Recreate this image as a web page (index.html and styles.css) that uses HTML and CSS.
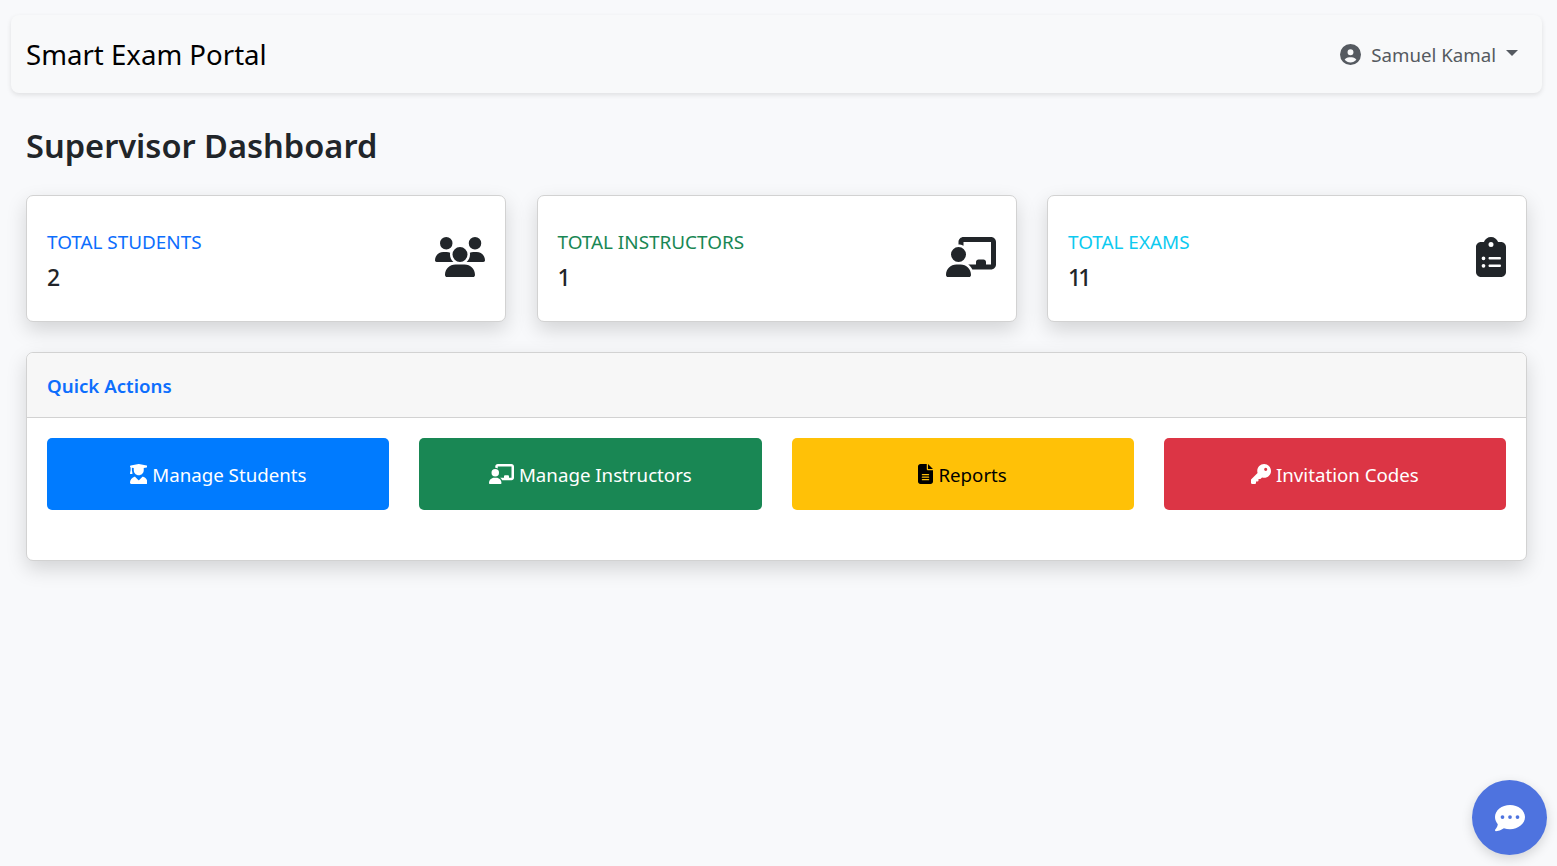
FILE: index.html
```html
<!DOCTYPE html>
<html lang="en">
<head>
  <meta charset="UTF-8" />
  <title>Supervisor Dashboard</title>
  <link rel="stylesheet" href="styles.css">
</head>
<body>

  <!-- Top bar -->
  <nav class="navbar">
    <a class="brand" href="#">Smart Exam Portal</a>
    <a class="user-menu" href="#">
      <svg class="user-icon" viewBox="0 0 512 512"><path d="M399 384.2C376.9 345.8 335.4 320 288 320H224c-47.4 0-88.9 25.8-111 64.2c35.2 39.2 86.2 63.8 143 63.8s107.8-24.7 143-63.8zM0 256a256 256 0 1 1 512 0A256 256 0 1 1 0 256zm256 16a72 72 0 1 0 0-144 72 72 0 1 0 0 144z"/></svg>
      <span>Samuel Kamal</span>
      <span class="caret"></span>
    </a>
  </nav>

  <main class="container">
    <h2 class="page-title">Supervisor Dashboard</h2>

    <!-- Stats -->
    <div class="stats">
      <div class="card stat-card">
        <div>
          <div class="stat-label text-blue">TOTAL STUDENTS</div>
          <div class="stat-value">2</div>
        </div>
        <svg class="stat-icon" viewBox="0 0 640 512"><path d="M144 0a80 80 0 1 1 0 160A80 80 0 1 1 144 0zM512 0a80 80 0 1 1 0 160A80 80 0 1 1 512 0zM0 298.7C0 239.8 47.8 192 106.7 192h42.7c15.9 0 31 3.5 44.6 9.7c-1.3 7.2-1.9 14.7-1.9 22.3c0 38.2 16.8 72.5 43.3 96c-.2 0-.4 0-.7 0H21.3C9.6 320 0 310.4 0 298.7zM405.3 320c-.2 0-.4 0-.7 0c26.6-23.5 43.3-57.8 43.3-96c0-7.6-.7-15-1.9-22.3c13.6-6.3 28.7-9.7 44.6-9.7h42.7C592.2 192 640 239.8 640 298.7c0 11.8-9.6 21.3-21.3 21.3H405.3zM224 224a96 96 0 1 1 192 0 96 96 0 1 1 -192 0zM128 485.3C128 411.7 187.7 352 261.3 352H378.7C452.3 352 512 411.7 512 485.3c0 14.7-11.9 26.7-26.7 26.7H154.7c-14.7 0-26.7-11.9-26.7-26.7z"/></svg>
      </div>
      <div class="card stat-card">
        <div>
          <div class="stat-label text-green">TOTAL INSTRUCTORS</div>
          <div class="stat-value">1</div>
        </div>
        <svg class="stat-icon" viewBox="0 0 640 512"><path d="M160 64c0-35.3 28.7-64 64-64H576c35.3 0 64 28.7 64 64V352c0 35.3-28.7 64-64 64H336.8c-11.8-25.5-29.9-47.5-52.4-64H384V320c0-17.7 14.3-32 32-32h64c17.7 0 32 14.3 32 32v32h64V64L224 64v49.1C205.2 102.2 183.3 96 160 96V64zm0 64a96 96 0 1 1 0 192 96 96 0 1 1 0-192zM133.3 352h53.3C260.3 352 320 411.7 320 485.3c0 14.7-11.9 26.7-26.7 26.7H26.7C11.9 512 0 500.1 0 485.3C0 411.7 59.7 352 133.3 352z"/></svg>
      </div>
      <div class="card stat-card">
        <div>
          <div class="stat-label text-cyan">TOTAL EXAMS</div>
          <div class="stat-value">11</div>
        </div>
        <svg class="stat-icon" viewBox="0 0 384 512"><path d="M192 0c-41.8 0-77.4 26.7-90.5 64H64C28.7 64 0 92.7 0 128V448c0 35.3 28.7 64 64 64H320c35.3 0 64-28.7 64-64V128c0-35.3-28.7-64-64-64H282.5C269.4 26.7 233.8 0 192 0zm0 64a32 32 0 1 1 0 64 32 32 0 1 1 0-64zM72 272a24 24 0 1 1 48 0 24 24 0 1 1 -48 0zm104-16H304c8.8 0 16 7.2 16 16s-7.2 16-16 16H176c-8.8 0-16-7.2-16-16s7.2-16 16-16zM72 368a24 24 0 1 1 48 0 24 24 0 1 1 -48 0zm88 0c0-8.8 7.2-16 16-16H304c8.8 0 16 7.2 16 16s-7.2 16-16 16H176c-8.8 0-16-7.2-16-16z"/></svg>
      </div>
    </div>

    <!-- Quick actions -->
    <div class="card actions-card">
      <div class="card-header">Quick Actions</div>
      <div class="card-body">
        <a class="btn btn-blue" href="#">
          <svg class="btn-icon" viewBox="0 0 448 512"><path d="M219.3 .5c3.1-.6 6.3-.6 9.4 0l200 40C439.9 42.7 448 52.6 448 64s-8.1 21.3-19.3 23.5L352 102.9V160c0 70.7-57.3 128-128 128s-128-57.3-128-128V102.9L48 93.3v65.1l15.7 78.4c.9 4.7-.3 9.6-3.3 13.3s-7.6 5.9-12.4 5.9H16c-4.8 0-9.3-2.1-12.4-5.9s-4.3-8.6-3.3-13.3L16 158.4V86.6C6.5 83.3 0 74.3 0 64C0 52.6 8.1 42.7 19.3 40.5l200-40zM111.9 327.7c10.5-3.4 21.8 .4 29.4 8.5l71 75.5c6.3 6.7 17 6.7 23.3 0l71-75.5c7.6-8.1 18.9-11.9 29.4-8.5C401 348.6 448 409.4 448 481.3c0 17-13.8 30.7-30.7 30.7H30.7C13.8 512 0 498.2 0 481.3c0-71.9 47-132.7 111.9-153.6z"/></svg>
          <span>Manage Students</span>
        </a>
        <a class="btn btn-green" href="#">
          <svg class="btn-icon" viewBox="0 0 640 512"><path d="M160 64c0-35.3 28.7-64 64-64H576c35.3 0 64 28.7 64 64V352c0 35.3-28.7 64-64 64H336.8c-11.8-25.5-29.9-47.5-52.4-64H384V320c0-17.7 14.3-32 32-32h64c17.7 0 32 14.3 32 32v32h64V64L224 64v49.1C205.2 102.2 183.3 96 160 96V64zm0 64a96 96 0 1 1 0 192 96 96 0 1 1 0-192zM133.3 352h53.3C260.3 352 320 411.7 320 485.3c0 14.7-11.9 26.7-26.7 26.7H26.7C11.9 512 0 500.1 0 485.3C0 411.7 59.7 352 133.3 352z"/></svg>
          <span>Manage Instructors</span>
        </a>
        <a class="btn btn-yellow" href="#">
          <svg class="btn-icon" viewBox="0 0 384 512"><path d="M64 0C28.7 0 0 28.7 0 64V448c0 35.3 28.7 64 64 64H320c35.3 0 64-28.7 64-64V160H256c-17.7 0-32-14.3-32-32V0H64zM256 0V128H384L256 0zM112 256H272c8.8 0 16 7.2 16 16s-7.2 16-16 16H112c-8.8 0-16-7.2-16-16s7.2-16 16-16zm0 64H272c8.8 0 16 7.2 16 16s-7.2 16-16 16H112c-8.8 0-16-7.2-16-16s7.2-16 16-16zm0 64H272c8.8 0 16 7.2 16 16s-7.2 16-16 16H112c-8.8 0-16-7.2-16-16s7.2-16 16-16z"/></svg>
          <span>Reports</span>
        </a>
        <a class="btn btn-red" href="#">
          <svg class="btn-icon" viewBox="0 0 512 512"><path d="M336 352c97.2 0 176-78.8 176-176S433.2 0 336 0S160 78.8 160 176c0 18.7 2.9 36.8 8.3 53.7L7 391c-4.5 4.5-7 10.6-7 17v80c0 13.3 10.7 24 24 24h80c13.3 0 24-10.7 24-24V448h40c13.3 0 24-10.7 24-24V384h40c6.4 0 12.5-2.5 17-7l33.3-33.3c16.9 5.4 35 8.3 53.7 8.3zM376 96a40 40 0 1 1 0 80 40 40 0 1 1 0-80z"/></svg>
          <span>Invitation Codes</span>
        </a>
      </div>
    </div>
  </main>

  <!-- Chat button -->
  <button class="chat-btn" type="button">
    <svg class="chat-icon" viewBox="0 0 512 512"><path d="M256 448c141.4 0 256-93.1 256-208S397.4 32 256 32S0 125.1 0 240c0 45.1 17.7 86.8 47.7 120.9c-1.9 24.5-11.4 46.3-21.4 62.9c-5.5 9.2-11.1 16.6-15.2 21.6c-2.1 2.5-3.7 4.4-4.9 5.7c-.6 .6-1 1.1-1.3 1.4l-.3 .3 0 0 0 0 0 0 0 0c-4.6 4.6-5.9 11.4-3.4 17.4c2.5 6 8.3 9.9 14.8 9.9c28.7 0 57.6-8.9 81.6-19.3c22.9-10 42.4-21.9 54.3-30.6c31.8 11.5 67 17.9 104.1 17.9zM128 208a32 32 0 1 1 0 64 32 32 0 1 1 0-64zm128 0a32 32 0 1 1 0 64 32 32 0 1 1 0-64zm96 32a32 32 0 1 1 64 0 32 32 0 1 1 -64 0z"/></svg>
  </button>

</body>
</html>
```

FILE: styles.css
```css
* {
  box-sizing: border-box;
}
html,
body {
  height: 100%;
}
body {
  margin: 0;
  background: #f8f9fb;
  color: #212529;
  font-family: "Noto Sans", Arial, sans-serif;
  font-size: 18.7px;
  overflow: hidden;
}
a {
  text-decoration: none;
}
svg {
  fill: currentColor;
}

/* navbar */
.navbar {
  display: flex;
  justify-content: space-between;
  align-items: center;
  height: 78px;
  margin: 15px 15px 0 11px;
  padding: 0 24px 0 15px;
  background: #f8f9fa;
  border-radius: 8px;
  box-shadow: 0 2px 5px rgba(0, 0, 0, 0.1);
}
.brand {
  color: #000;
  font-size: 27.6px;
  margin-top: -1px;
}
.user-menu {
  display: flex;
  align-items: center;
  color: #555a60;
}
.user-icon {
  width: 21px;
  height: 21px;
  margin-right: 10px;
}
.caret {
  width: 0;
  height: 0;
  margin-left: 10px;
  margin-bottom: 3px;
  border-top: 6px solid #555a60;
  border-left: 6px solid transparent;
  border-right: 6px solid transparent;
}

/* content */
.container {
  padding: 0 30px 0 26px;
}
.page-title {
  margin: 30px 0 27px;
  font-size: 32.6px;
  font-weight: 600;
  line-height: 45px;
}
.card {
  background: #fff;
  border: 1px solid #d2d2d2;
  border-radius: 7px;
  box-shadow: 0 8px 20px rgba(0, 0, 0, 0.15);
}
.stats {
  display: grid;
  grid-template-columns: repeat(3, 1fr);
  gap: 30px 30.5px;
  margin-bottom: 30px;
}
.stat-card {
  display: flex;
  justify-content: space-between;
  align-items: center;
  height: 127px;
  padding: 0 20px;
}
.stat-label {
  font-size: 18.9px;
  line-height: 26px;
  padding-top: 4px;
}
.stat-value {
  margin-top: 6px;
  font-size: 23px;
  font-weight: 500;
  letter-spacing: -3px;
  line-height: 32px;
}
.text-blue {
  color: #0d6efd;
}
.text-green {
  color: #198754;
}
.text-cyan {
  color: #0dcaf0;
}
.stat-icon {
  height: 40px;
  margin-bottom: 3px;
}

/* quick actions */
.actions-card {
  height: 209px;
}
.card-header {
  height: 65px;
  padding: 0 20px;
  background: #f7f7f7;
  border-bottom: 1px solid #d2d2d2;
  border-radius: 7px 7px 0 0;
  color: #0d6efd;
  font-weight: 600;
  line-height: 65px;
}
.card-body {
  display: grid;
  grid-template-columns: repeat(4, 1fr);
  gap: 30px;
  padding: 20px;
}
.btn {
  display: flex;
  justify-content: center;
  align-items: center;
  gap: 5px;
  height: 72px;
  border-radius: 5px;
  color: #fff;
}
.btn span {
  padding-top: 1px;
}
.btn-icon {
  height: 20px;
}
.btn-blue {
  background: #007bff;
}
.btn-green {
  background: #198754;
}
.btn-yellow {
  background: #ffc107;
  color: #000;
}
.btn-red {
  background: #dc3545;
}

/* chat button */
.chat-btn {
  position: fixed;
  right: 10px;
  bottom: 11px;
  display: flex;
  justify-content: center;
  align-items: center;
  width: 75px;
  height: 75px;
  padding: 0;
  border: none;
  border-radius: 50%;
  background: #4e73df;
  color: #fff;
  box-shadow: 0 4px 12px rgba(0, 0, 0, 0.15);
}
.chat-icon {
  width: 30px;
  height: 30px;
}
```
